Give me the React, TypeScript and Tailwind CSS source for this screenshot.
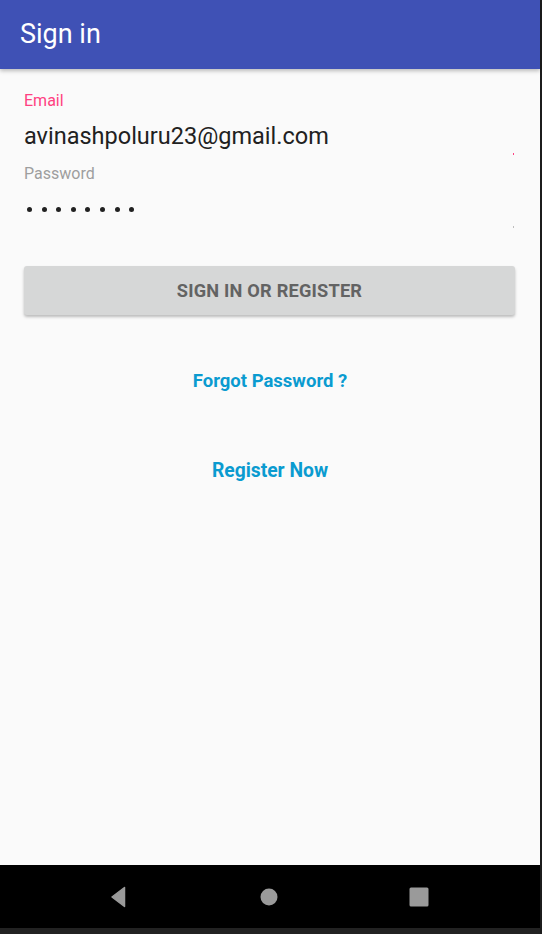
const FONT = "font-['Roboto','Liberation_Sans',sans-serif]";

function TextField({
	label,
	labelColor,
	markColor,
	children,
}: {
	label: string;
	labelColor: string;
	markColor: string;
	children: React.ReactNode;
}) {
	return (
		<div className="relative pb-[6px]">
			<p className={`text-[16px] leading-[18px] ${labelColor}`}>{label}</p>
			<div className="mt-[12px] flex h-[28px] items-center">{children}</div>
			<span className={`absolute right-[2px] bottom-[1px] h-[2px] w-[1px] ${markColor}`} />
		</div>
	);
}

function PasswordDots({ count }: { count: number }) {
	return (
		<div className="flex items-center gap-[9.6px] pl-[3px]">
			{Array.from({ length: count }).map((_, i) => (
				<span key={i} className="h-[5px] w-[5px] rounded-full bg-[#212121]" />
			))}
		</div>
	);
}

function NavBar() {
	return (
		<div className="flex h-[63px] items-center justify-center gap-[110px] bg-black pr-[3px]">
			<svg width="40" height="40" viewBox="0 0 40 40">
				<path d="M25.5 10.5 L25.5 29.5 L13 20 Z" fill="#9a9a9a" stroke="#9a9a9a" strokeWidth="1.5" strokeLinejoin="round" />
			</svg>
			<svg width="40" height="40" viewBox="0 0 40 40">
				<circle cx="20" cy="20" r="8.5" fill="#9a9a9a" />
			</svg>
			<svg width="40" height="40" viewBox="0 0 40 40">
				<rect x="10.5" y="10.5" width="19" height="19" rx="1.5" fill="#9a9a9a" />
			</svg>
		</div>
	);
}

export default function App() {
	return (
		<div className={`flex h-[934px] w-[542px] ${FONT} bg-[#1c1c1c]`}>
			<div className="flex w-[540px] flex-col">
				<header className="relative z-10 flex h-[69px] items-center bg-[#3f51b5] px-[20px] shadow-[0_2px_4px_rgba(0,0,0,0.25)]">
					<h1 className="text-[27px] leading-none text-white">Sign in</h1>
				</header>
				<main className="flex flex-1 flex-col bg-[#fafafa] px-[24px] pt-[23px]">
					<TextField label="Email" labelColor="text-[#ff4081]" markColor="bg-[#ff4081]">
						<p className="text-[23.5px] leading-[28px] text-[#212121]">
							avinashpoluru23@gmail.com
						</p>
					</TextField>
					<div className="mt-[9px]">
						<TextField label="Password" labelColor="text-[#9e9e9e]" markColor="bg-[#bdbdbd]">
							<PasswordDots count={8} />
						</TextField>
					</div>
					<button className="mt-[37px] h-[49px] w-[491px] rounded-[3px] bg-[#d6d7d7] text-[18.2px] font-bold tracking-[0.2px] text-[#636363] shadow-[0_2px_3px_rgba(0,0,0,0.25)]">
						SIGN IN OR REGISTER
					</button>
					<a className="mt-[54px] self-center text-[18.5px] leading-[24px] font-bold text-[#0a9bd0]">
						Forgot Password ?
					</a>
					<a className="mt-[66px] self-center text-[19.3px] leading-[24px] font-bold text-[#0a9bd0]">
						Register Now
					</a>
				</main>
				<NavBar />
				<div className="h-[6px] bg-[#222222]" />
			</div>
		</div>
	);
}
